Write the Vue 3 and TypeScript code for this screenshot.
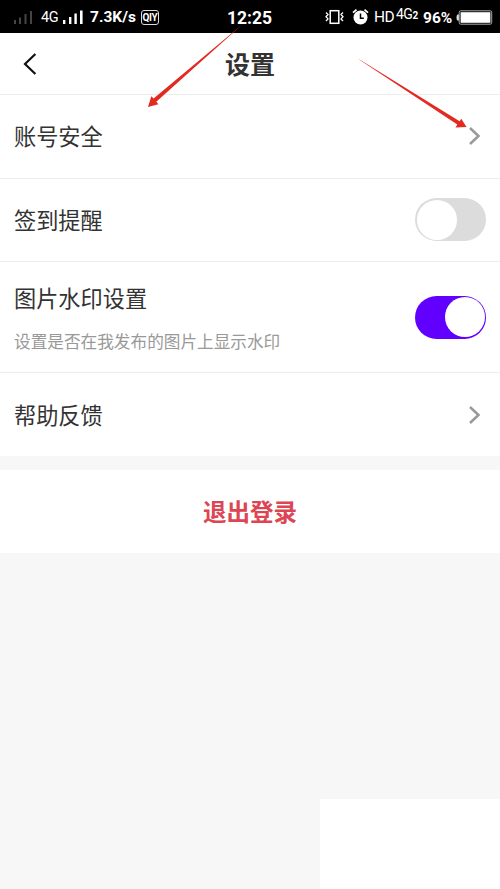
<script setup lang="ts">
import { ref } from 'vue'

interface SettingRow {
  id: string
  title: string
  description?: string
  kind: 'link' | 'switch'
}

const rows: SettingRow[] = [
  { id: 'account', title: '账号安全', kind: 'link' },
  { id: 'checkin', title: '签到提醒', kind: 'switch' },
  { id: 'watermark', title: '图片水印设置', description: '设置是否在我发布的图片上显示水印', kind: 'switch' },
  { id: 'help', title: '帮助反馈', kind: 'link' },
]

const switches = ref<Record<string, boolean>>({ checkin: false, watermark: true })

function toggle(id: string) {
  switches.value[id] = !switches.value[id]
}
</script>

<template>
  <div class="screen">
    <div class="status">
      <div class="status-left">
        <svg class="bars dim" width="20" height="16" viewBox="0 0 20 16"><path d="M1 11h2v4H1zM6 8.500h2V15H6zM11.500 5h2v10h-2zM17 2h2v13h-2z" /></svg>
        <span class="net">4G</span>
        <svg class="bars" width="20" height="16" viewBox="0 0 20 16"><path d="M0 11h2.400v4H0zM6 8h2.400v7H6zM11.400 4.500h2.400V15h-2.400zM17 1.500h2.600V15H17z" /></svg>
        <span class="speed">7.3K/s</span>
        <span class="diy"><span class="diy-text">QIY</span></span>
      </div>
      <span class="clock">12:25</span>
      <div class="status-right">
        <svg class="vibrate" width="19" height="18" viewBox="0 0 19 18" fill="none" stroke="#fff">
          <rect x="5.200" y="2.700" width="8.600" height="12.600" stroke-width="1.500" />
          <path d="M1 4.500l2 2-2 2.200 2 2.200-2 2.100M18 4.500l-2 2 2 2.200-2 2.200 2 2.100" stroke-width="1.300" />
        </svg>
        <svg class="alarm" width="17" height="18" viewBox="0 0 17 18" fill="none">
          <circle cx="8.500" cy="9.500" r="7" fill="#fff" />
          <path d="M1 4.700L4.500 1.600M16 4.700l-3.500-3.100" stroke="#fff" stroke-width="1.800" />
          <path d="M8.500 5.500v4.700h3.300" stroke="#000" stroke-width="1.500" />
        </svg>
        <span class="hd">HD</span>
        <span class="net2">4G<b>2</b></span>
        <span class="percent">96%</span>
        <svg class="battery" width="37" height="15" viewBox="0 0 37 15">
          <path d="M3 4.500H1.600Q.5 5 .5 7.500t1.100 3H3z" fill="#ddd" />
          <rect x="3.200" y=".8" width="32.500" height="13.400" rx="1.500" fill="none" stroke="#aaa" />
          <rect x="4.600" y="2.200" width="29.800" height="10.600" fill="#fff" />
        </svg>
      </div>
    </div>

    <header class="header">
      <svg class="back" width="16" height="24" viewBox="0 0 16 24"><path d="M13.400 2L3 12l10.400 10" /></svg>
      <h1 class="title">设置</h1>
    </header>

    <main>
      <section class="list">
        <div v-for="row in rows" :key="row.id" class="row" :class="{ tall: row.description }">
          <div class="copy">
            <span class="label">{{ row.title }}</span>
            <span v-if="row.description" class="description">{{ row.description }}</span>
          </div>
          <svg v-if="row.kind === 'link'" class="chevron" width="14" height="20" viewBox="0 0 14 20"><path d="M2 2l8.500 8L2 18" /></svg>
          <button v-else class="switch" :class="{ on: switches[row.id] }" type="button" role="switch" :aria-checked="switches[row.id]" @click="toggle(row.id)">
            <span class="knob"></span>
          </button>
        </div>
      </section>
      <button class="logout" type="button">退出登录</button>
    </main>

    <svg class="arrows" width="500" height="150" viewBox="0 0 500 150">
      <path d="M244 23L153.600 98.600 151.300 96.200 148 107 158.400 104.200 156.300 101.700z" />
      <path d="M359 59.500L457.300 124.600 455.500 127.500 466.500 127 461.300 118.700 459.600 121.200 359.500 59.500z" />
    </svg>
    <div class="corner"></div>
  </div>
</template>

<style>
body {
  margin: 0;
  background: #f7f7f7;
}
</style>

<style scoped>
.screen {
  position: relative;
  width: 500px;
  height: 889px;
  overflow: hidden;
  background: #f7f7f7;
  color: #333;
  font-family: "Noto Sans CJK SC", sans-serif;
}

.status {
  box-sizing: border-box;
  display: flex;
  align-items: center;
  height: 33px;
  padding: 1px 7px 0 13px;
  background: #000;
  color: #fff;
  font-family: Roboto, sans-serif;
  line-height: 20px;
  white-space: nowrap;
}

.status-left {
  display: flex;
  align-items: center;
  width: 214px;
}

.bars {
  flex: none;
  fill: #fff;
}

.dim {
  fill: #454545;
}

.net {
  box-sizing: border-box;
  width: 30px;
  padding: 1px 0 0 8px;
  font-size: 14.500px;
  letter-spacing: -0.5px;
}

.speed {
  box-sizing: border-box;
  width: 58px;
  padding-left: 7px;
  font-size: 15.500px;
  font-weight: 700;
}

.diy {
  display: flex;
  align-items: center;
  justify-content: center;
  box-sizing: border-box;
  width: 18px;
  height: 15px;
  border: 1.500px solid #ddd;
  border-radius: 3px;
}

.diy-text {
  font-size: 10px;
  font-weight: 700;
  line-height: 11px;
  letter-spacing: -0.3px;
}

.clock {
  width: 45px;
  padding-top: 1px;
  font-size: 17.500px;
  font-weight: 700;
}

.status-right {
  display: flex;
  align-items: center;
  margin-left: auto;
}

.vibrate {
  margin-right: 8px;
}

.alarm {
  margin-right: 5px;
}

.hd {
  width: 22px;
  font-size: 15.500px;
  letter-spacing: -0.5px;
}

.net2 {
  width: 27px;
  padding-bottom: 4px;
  font-size: 14px;
  letter-spacing: -0.5px;
}

.net2 b {
  font-size: 10px;
}

.percent {
  width: 33px;
  padding-top: 1px;
  font-size: 15.500px;
  font-weight: 700;
}

.header {
  box-sizing: border-box;
  display: grid;
  grid-template-columns: 60px 1fr 60px;
  align-items: center;
  height: 62px;
  border-bottom: 1px solid #ededed;
  background: #fff;
}

.back {
  margin-left: 22px;
  fill: none;
  stroke: #111;
  stroke-width: 2.200;
}

.title {
  margin: 0;
  padding-bottom: 2px;
  font-size: 25px;
  font-weight: 700;
  line-height: 36px;
  text-align: center;
}

.list {
  background: #fff;
}

.row {
  box-sizing: border-box;
  display: flex;
  align-items: center;
  justify-content: space-between;
  height: 83.500px;
  padding: 0 14px;
  border-bottom: 1px solid #ededed;
}

.row.tall {
  height: 111px;
}

.row:last-child {
  height: 83px;
  border-bottom: 0;
}

.copy {
  display: flex;
  flex-direction: column;
  gap: 16px;
  padding-bottom: 2px;
}

.tall .copy {
  padding-bottom: 0;
}

.label {
  font-size: 22.200px;
  line-height: 32px;
}

.description {
  color: #999;
  font-size: 16.650px;
  line-height: 24px;
}

.chevron {
  margin-right: 4px;
  fill: none;
  stroke: #999;
  stroke-width: 2.500;
}

.switch {
  display: flex;
  align-items: center;
  box-sizing: border-box;
  width: 71px;
  height: 43px;
  padding: 1.500px;
  border: 0;
  border-radius: 22px;
  background: #dcdcdc;
}

.switch.on {
  justify-content: flex-end;
  background: #6200ff;
}

.knob {
  width: 40px;
  height: 40px;
  border-radius: 50%;
  background: #fff;
}

.logout {
  display: block;
  width: 500px;
  height: 83px;
  margin-top: 14px;
  padding: 0 0 2px;
  border: 0;
  background: #fff;
  color: #dc4654;
  font: 700 23.500px/36px "Noto Sans CJK SC", sans-serif;
}

.arrows {
  position: absolute;
  top: 0;
  left: 0;
  fill: #e22b20;
  pointer-events: none;
}

.corner {
  position: absolute;
  right: 0;
  bottom: 0;
  width: 180px;
  height: 90px;
  background: #fff;
}
</style>
